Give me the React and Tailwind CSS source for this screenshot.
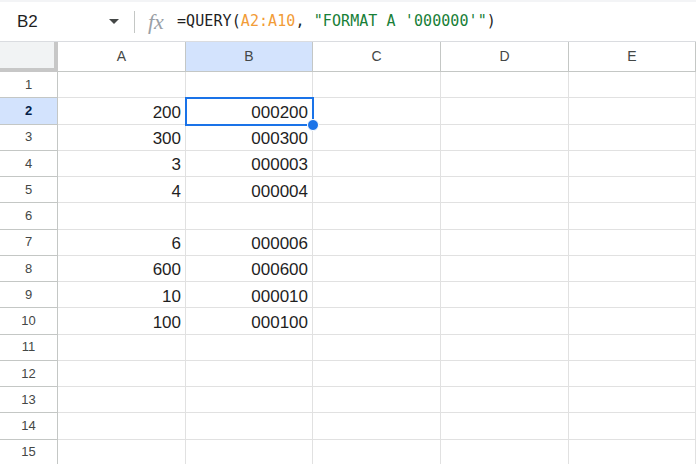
import React from "react";

const cols = ["A", "B", "C", "D", "E"];
const data = {
  2: ["200", "000200"],
  3: ["300", "000300"],
  4: ["3", "000003"],
  5: ["4", "000004"],
  7: ["6", "000006"],
  8: ["600", "000600"],
  9: ["10", "000010"],
  10: ["100", "000100"],
};

const gridCols = "grid grid-cols-[58px_128px_127px_128px_128px_127px]";

export default function App() {
  const rows = Array.from({ length: 15 }, (_, i) => i + 1);
  return (
    <div className="w-[696px] h-[464px] overflow-hidden bg-white relative" style={{ fontFamily: '"Liberation Sans", Arial, sans-serif' }}>
      {/* formula bar */}
      <div className="h-[2px] bg-[#f3f4f6]" />
      <div className="h-[40px] flex items-center border-b border-[#dadce0]">
        <div className="w-[134px] flex items-center pl-[17px] pr-[15px]">
          <span className="text-[17px] text-[#1f1f1f]">B2</span>
          <span className="ml-auto w-0 h-0 border-l-[5px] border-r-[5px] border-t-[5px] border-l-transparent border-r-transparent border-t-[#444746]" />
        </div>
        <div className="w-px h-[22px] bg-[#c4c7c5]" />
        <span className="ml-[13px] w-[27px] text-[22px] italic text-[#9aa0a6] leading-none" style={{ fontFamily: '"Liberation Serif", serif' }}>
          fx
        </span>
        <span className="ml-[2px] text-[15px] text-[#1f1f1f] whitespace-pre tracking-[0.08px]" style={{ fontFamily: '"DejaVu Sans Mono", monospace' }}>
          =QUERY(<span className="text-[#f29c38]">A2:A10</span>, <span className="text-[#188038]">"FORMAT A '000000'"</span>)
        </span>
      </div>

      {/* column headers */}
      <div className={`${gridCols} h-[30px]`}>
        <div className="bg-[#f1f3f4] border-r-[4px] border-b-[4px] border-[#c7c7c7]" />
        {cols.map((c) => (
          <div
            key={c}
            className={`flex items-center justify-center text-[14px] text-[#444746] border-r border-b border-[#c4c7c5] ${c === "B" ? "bg-[#d3e3fd] text-[#0b1f44]" : "bg-white"}`}
          >
            {c}
          </div>
        ))}
      </div>

      {/* rows */}
      {rows.map((r) => (
        <div key={r} className={`${gridCols} h-[26.25px]`}>
          <div
            className={`flex items-center justify-center text-[13px] border-r border-b border-[#c4c7c5] ${r === 2 ? "bg-[#d3e3fd] text-[#041e49] font-bold" : "bg-white text-[#444746]"}`}
          >
            {r}
          </div>
          {cols.map((c, ci) => {
            const val = data[r] && ci < 2 ? data[r][ci] : "";
            return (
              <div
                key={c}
                className="flex items-center justify-end pr-[4px] text-[17px] text-[#1f1f1f] border-r border-b border-[#e1e1e1] leading-none pt-[3px]"
              >
                {val}
              </div>
            );
          })}
        </div>
      ))}

      {/* selection */}
      <div className="absolute left-[185px] top-[97px] w-[129px] h-[29px] border-2 border-[#1a73e8] pointer-events-none" />
      <div className="absolute left-[307px] top-[119px] w-[12px] h-[12px] rounded-full bg-[#1a73e8] border border-white" />
    </div>
  );
}
